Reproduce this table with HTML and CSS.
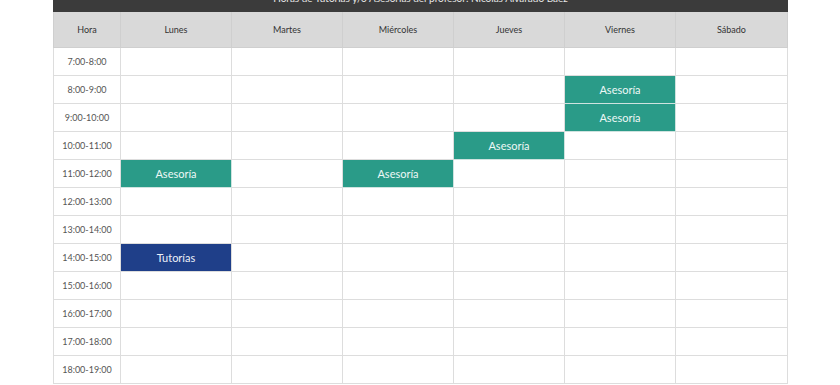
FILE: index.html
```html
<!DOCTYPE html>
<html lang="es">
<head>
<meta charset="utf-8">
<title>Horario</title>
<link rel="stylesheet" href="styles.css">
</head>
<body>
<div class="schedule">
  <div class="title">Horas de Tutorías y/o Asesorías del profesor: Nicolás Alvarado Báez</div>
  <table class="grid">
    <colgroup>
      <col class="c-hora">
      <col class="c-day"><col class="c-day"><col class="c-day"><col class="c-day"><col class="c-day"><col class="c-last">
    </colgroup>
    <thead>
      <tr><th>Hora</th><th>Lunes</th><th>Martes</th><th>Miércoles</th><th>Jueves</th><th>Viernes</th><th>Sábado</th></tr>
    </thead>
    <tbody>
      <tr><td class="h">7:00-8:00</td><td></td><td></td><td></td><td></td><td></td><td></td></tr>
      <tr><td class="h">8:00-9:00</td><td></td><td></td><td></td><td></td><td class="ase">Asesoría</td><td></td></tr>
      <tr><td class="h">9:00-10:00</td><td></td><td></td><td></td><td></td><td class="ase">Asesoría</td><td></td></tr>
      <tr><td class="h">10:00-11:00</td><td></td><td></td><td></td><td class="ase">Asesoría</td><td></td><td></td></tr>
      <tr><td class="h">11:00-12:00</td><td class="ase">Asesoría</td><td></td><td class="ase">Asesoría</td><td></td><td></td><td></td></tr>
      <tr><td class="h">12:00-13:00</td><td></td><td></td><td></td><td></td><td></td><td></td></tr>
      <tr><td class="h">13:00-14:00</td><td></td><td></td><td></td><td></td><td></td><td></td></tr>
      <tr><td class="h">14:00-15:00</td><td class="tut">Tutorías</td><td></td><td></td><td></td><td></td><td></td></tr>
      <tr><td class="h">15:00-16:00</td><td></td><td></td><td></td><td></td><td></td><td></td></tr>
      <tr><td class="h">16:00-17:00</td><td></td><td></td><td></td><td></td><td></td><td></td></tr>
      <tr><td class="h">17:00-18:00</td><td></td><td></td><td></td><td></td><td></td><td></td></tr>
      <tr><td class="h">18:00-19:00</td><td></td><td></td><td></td><td></td><td></td><td></td></tr>
    </tbody>
  </table>
</div>
</body>
</html>
```
FILE: styles.css
```css
html, body {
  margin: 0;
  padding: 0;
  background: #ffffff;
  font-family: Lato, "Open Sans", "Liberation Sans", sans-serif;
  overflow: hidden;
}
.schedule {
  width: 735px;
  margin: -16px 0 0 53px;
}
.title {
  height: 28px;
  line-height: 28px;
  background: #3b3b3b;
  color: #e8e8e8;
  font-size: 10px;
  text-align: center;
}
.grid {
  width: 734px;
  border-collapse: collapse;
  table-layout: fixed;
}
.c-hora { width: 67px; }
.c-day { width: 111px; }
.c-last { width: 112px; }
.grid th {
  height: 35px;
  background: #d9d9d9;
  color: #333;
  font-size: 9px;
  font-weight: normal;
  border: 1px solid #cfcfcf;
  border-top: none;
  padding: 0;
}
.grid td {
  height: 27px;
  border: 1px solid #dddddd;
  padding: 0;
  text-align: center;
  font-size: 9px;
  color: #444;
}
.grid td.h {
  color: #555;
}
.grid td.ase {
  background: #2a9b88;
  color: #eef8f6;
  font-size: 11px;
  border-color: #cfe3df;
}
.grid td.tut {
  background: #1f3f89;
  color: #eef1f8;
  font-size: 11px;
}
```
